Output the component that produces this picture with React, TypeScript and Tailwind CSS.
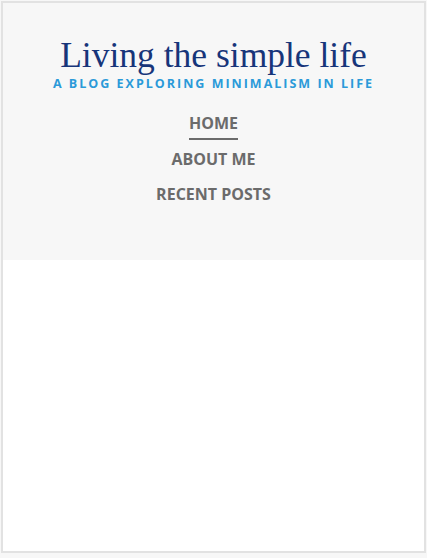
export default function App() {
  return (
    <div className="min-h-[558px] bg-[#f7f7f7] pt-[1px] pl-[1px] pr-[1px]">
      <div className="h-[552px] border-2 border-[#e2e2e2] bg-white flex flex-col">
        <header className="bg-[#f7f7f7] h-[257px] flex flex-col items-center pt-[33px]">
          <h1 className="text-[35.5px] leading-[38px] text-[#17357a] font-['Liberation_Serif',serif]">
            Living the simple life
          </h1>
          <p className="mt-[2px] text-[12.5px] font-bold tracking-[2px] text-[#2b9ad9] font-['Open_Sans',sans-serif] uppercase leading-[16px]">
            A blog exploring minimalism in life
          </p>
          <nav className="mt-[20px] flex flex-col items-center font-['Open_Sans',sans-serif] font-bold text-[16px] text-[#6b6b6b]">
            <a className="leading-[22px] pb-[4px] border-b-2 border-[#6b6b6b]">HOME</a>
            <a className="leading-[22px] mt-[8px]">ABOUT ME</a>
            <a className="leading-[22px] mt-[13px]">RECENT POSTS</a>
          </nav>
        </header>
      </div>
    </div>
  );
}
